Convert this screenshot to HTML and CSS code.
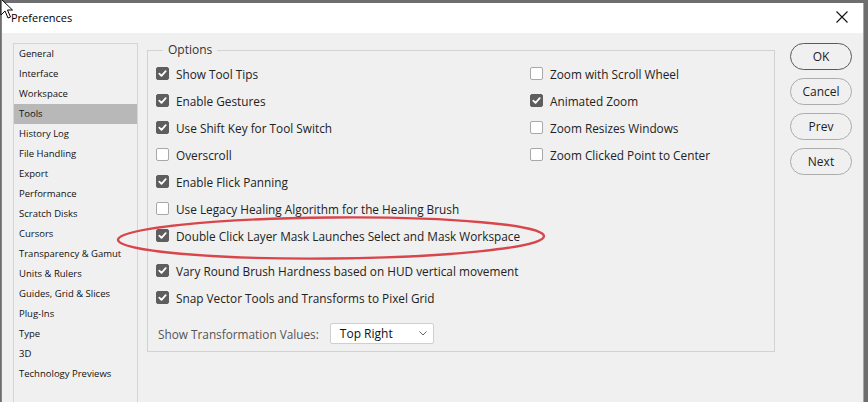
FILE: index.html
```html
<!DOCTYPE html>
<html>
<head>
<meta charset="utf-8">
<link rel="stylesheet" href="styles.css">
</head>
<body>
<div class="window">
  <div class="titlebar">
    <span class="title">Preferences</span>
    <svg class="close" width="12" height="12" viewBox="0 0 12 12"><path d="M0.5 0.5 L11.5 11.5 M11.5 0.5 L0.5 11.5" stroke="#111" stroke-width="1.1" fill="none"/></svg>
  </div>
  <div class="content">
    <ul class="sidebar">
      <li>General</li>
      <li>Interface</li>
      <li>Workspace</li>
      <li class="active">Tools</li>
      <li>History Log</li>
      <li>File Handling</li>
      <li>Export</li>
      <li>Performance</li>
      <li>Scratch Disks</li>
      <li>Cursors</li>
      <li>Transparency &amp; Gamut</li>
      <li>Units &amp; Rulers</li>
      <li>Guides, Grid &amp; Slices</li>
      <li>Plug-Ins</li>
      <li>Type</li>
      <li>3D</li>
      <li>Technology Previews</li>
    </ul>
    <fieldset class="options">
      <legend>Options</legend>
      <div class="cols">
        <div class="col left">
          <div class="row"><span class="cb on"></span><span>Show Tool Tips</span></div>
          <div class="row"><span class="cb on"></span><span>Enable Gestures</span></div>
          <div class="row"><span class="cb on"></span><span>Use Shift Key for Tool Switch</span></div>
          <div class="row"><span class="cb"></span><span>Overscroll</span></div>
          <div class="row"><span class="cb on"></span><span>Enable Flick Panning</span></div>
          <div class="row"><span class="cb"></span><span>Use Legacy Healing Algorithm for the Healing Brush</span></div>
          <div class="row"><span class="cb on"></span><span>Double Click Layer Mask Launches Select and Mask Workspace</span></div>
          <div class="row gap"><span class="cb on"></span><span>Vary Round Brush Hardness based on HUD vertical movement</span></div>
          <div class="row"><span class="cb on"></span><span>Snap Vector Tools and Transforms to Pixel Grid</span></div>
        </div>
        <div class="col right">
          <div class="row"><span class="cb"></span><span>Zoom with Scroll Wheel</span></div>
          <div class="row"><span class="cb on"></span><span>Animated Zoom</span></div>
          <div class="row"><span class="cb"></span><span>Zoom Resizes Windows</span></div>
          <div class="row"><span class="cb"></span><span>Zoom Clicked Point to Center</span></div>
        </div>
      </div>
      <div class="selectrow">
        <span class="sel-label">Show Transformation Values:</span>
        <div class="select"><span>Top Right</span>
          <svg width="8" height="5" viewBox="0 0 8 5"><path d="M0.5 0.5 L4 4 L7.5 0.5" stroke="#666" stroke-width="1" fill="none"/></svg>
        </div>
      </div>
    </fieldset>
    <div class="buttons">
      <div class="btn primary">OK</div>
      <div class="btn">Cancel</div>
      <div class="btn">Prev</div>
      <div class="btn">Next</div>
    </div>
  </div>
  <svg class="ellipse" width="460" height="60" viewBox="0 0 460 60">
    <ellipse cx="230" cy="30" rx="213" ry="20.5" transform="rotate(-0.5 230 30)" fill="none" stroke="#d8464c" stroke-width="2.4"/>
  </svg>
</div>
<svg class="cursor" width="14" height="22" viewBox="0 0 14 22">
  <path d="M1 1 L1 17 L5 13 L8 20 L10.5 19 L7.5 12 L12.5 12 Z" fill="#fff" stroke="#000" stroke-width="1" stroke-linejoin="round"/>
</svg>
</body>
</html>
```

FILE: styles.css
```css
html, body {
  margin: 0;
  padding: 0;
}
body {
  background: #6e6e6e;
  width: 868px;
  height: 402px;
  overflow: hidden;
  font-family: "Open Sans", "Noto Sans", sans-serif;
  color: #222;
  position: relative;
}
.window {
  position: relative;
  margin: 3px 4px 0 1px;
  height: 399px;
  overflow: hidden;
  border-left: 1px solid #3a9ad6;
  border-right: 1px solid #5cbde6;
  background: #f0f0f0;
}
.titlebar {
  height: 30px;
  background: #fff;
  display: flex;
  align-items: center;
  justify-content: space-between;
  padding: 0 15px 0 9px;
}
.title {
  font-size: 11px;
  color: #000;
  margin-top: -1px;
}
.close {
  margin-top: -3px;
}
.content {
  display: flex;
  align-items: flex-start;
  padding-left: 11px;
}
.sidebar {
  list-style: none;
  margin: 10px 0 0 0;
  padding: 0;
  width: 123px;
  height: 360px;
  border: 1px solid #d5d5d5;
  flex: none;
}
.sidebar li {
  height: 20px;
  line-height: 20px;
  padding-left: 5px;
  font-size: 9.5px;
  color: #111;
  white-space: nowrap;
}
.sidebar li.active {
  background: #b8b8b8;
}
.options {
  margin: 9px 0 0 9px;
  padding: 0 0 7px 8px;
  width: 618px;
  border: 1px solid #d3d3d3;
  flex: none;
}
.options legend {
  margin-left: 7px;
  padding: 0 5px;
  font-size: 12px;
  line-height: 16px;
  color: #333;
}
.cols {
  display: flex;
  padding-top: 2px;
}
.col.left {
  width: 374px;
}
.row {
  height: 27px;
  display: flex;
  align-items: center;
  font-size: 11.8px;
  color: #222;
  white-space: nowrap;
}
.row.gap {
  margin-top: 8px;
}
.cb {
  width: 13px;
  height: 13px;
  box-sizing: border-box;
  border: 1px solid #a8a8a8;
  border-radius: 2px;
  background: #fff;
  margin-right: 7px;
  flex: none;
}
.cb.on {
  border-color: #5e5e5e;
  background: #5e5e5e url("data:image/svg+xml;utf8,<svg xmlns='http://www.w3.org/2000/svg' width='11' height='11' viewBox='0 0 11 11'><path d='M2.3 5.6 L4.5 7.8 L8.7 3.2' stroke='white' stroke-width='1.8' fill='none' stroke-linecap='round' stroke-linejoin='round'/></svg>") center/11px 11px no-repeat;
}
.selectrow {
  display: flex;
  align-items: center;
  margin-top: 12px;
  padding-left: 2px;
}
.sel-label {
  font-size: 11.8px;
  color: #555;
  margin-right: 11px;
}
.select {
  width: 104px;
  height: 21px;
  box-sizing: border-box;
  border: 1px solid #cfcfcf;
  border-radius: 2px;
  background: #fff;
  display: flex;
  align-items: center;
  justify-content: space-between;
  padding: 0 6px 0 9px;
  font-size: 12px;
  color: #111;
}
.buttons {
  margin: 10px 0 0 15px;
  display: flex;
  flex-direction: column;
  gap: 8px;
}
.btn {
  width: 62px;
  height: 27px;
  box-sizing: border-box;
  border: 1px solid #acacac;
  border-radius: 14px;
  display: flex;
  align-items: center;
  justify-content: center;
  font-size: 12px;
  color: #222;
  background: #f0f0f0;
}
.btn.primary {
  border-color: #5a5a5a;
}
.ellipse {
  position: absolute;
  left: 99px;
  top: 205px;
}
.cursor {
  position: absolute;
  left: 0;
  top: -2px;
}
```
